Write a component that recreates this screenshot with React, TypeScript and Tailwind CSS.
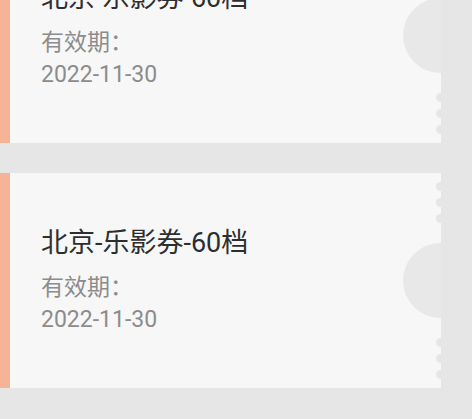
import React from "react";

type Coupon = { id: number; title: string; label: string; date: string };

const coupons: Coupon[] = [
  { id: 1, title: "北京-乐影券-60档", label: "有效期：", date: "2022-11-30" },
  { id: 2, title: "北京-乐影券-60档", label: "有效期：", date: "2022-11-30" },
];

// little scallops cut into the ticket's right edge
const topDots = [13, 29, 45];
const bottomDots = [169, 185, 201];

function Dot({ top }: { top: number }) {
  return (
    <span
      className="absolute right-[-4px] h-[9px] w-[9px] rounded-full bg-[#e6e6e6]"
      style={{ top: top - 4.5 }}
    />
  );
}

function CouponCard({ c }: { c: Coupon }) {
  return (
    <div className="relative flex h-[215px] w-[441px] overflow-hidden bg-[#f7f7f7]">
      <div className="w-[10px] shrink-0 bg-[#f6b497]" />
      <div className="flex flex-col pl-[31px] pt-[53px]">
        <div className="text-[27px] leading-[34px] text-[#2e2e2e]">{c.title}</div>
        <div className="mt-[12px] text-[23px] leading-[32px] text-[#8c8c8c]">{c.label}</div>
        <div className="text-[23px] leading-[32px] text-[#8c8c8c]">{c.date}</div>
      </div>
      <span className="absolute right-[-37px] top-[70px] h-[75px] w-[75px] rounded-full bg-[#e8e8e8]" />
      {topDots.map((t) => (
        <Dot key={`t${t}`} top={t} />
      ))}
      {bottomDots.map((t) => (
        <Dot key={`b${t}`} top={t} />
      ))}
    </div>
  );
}

export default function App() {
  return (
    <div
      className="h-[419px] w-[472px] overflow-hidden bg-[#e6e6e6]"
      style={{ fontFamily: 'Roboto, "Noto Sans CJK SC", sans-serif' }}
    >
      <div className="-mt-[72px] flex flex-col gap-[30px]">
        {coupons.map((c) => (
          <CouponCard key={c.id} c={c} />
        ))}
      </div>
    </div>
  );
}
